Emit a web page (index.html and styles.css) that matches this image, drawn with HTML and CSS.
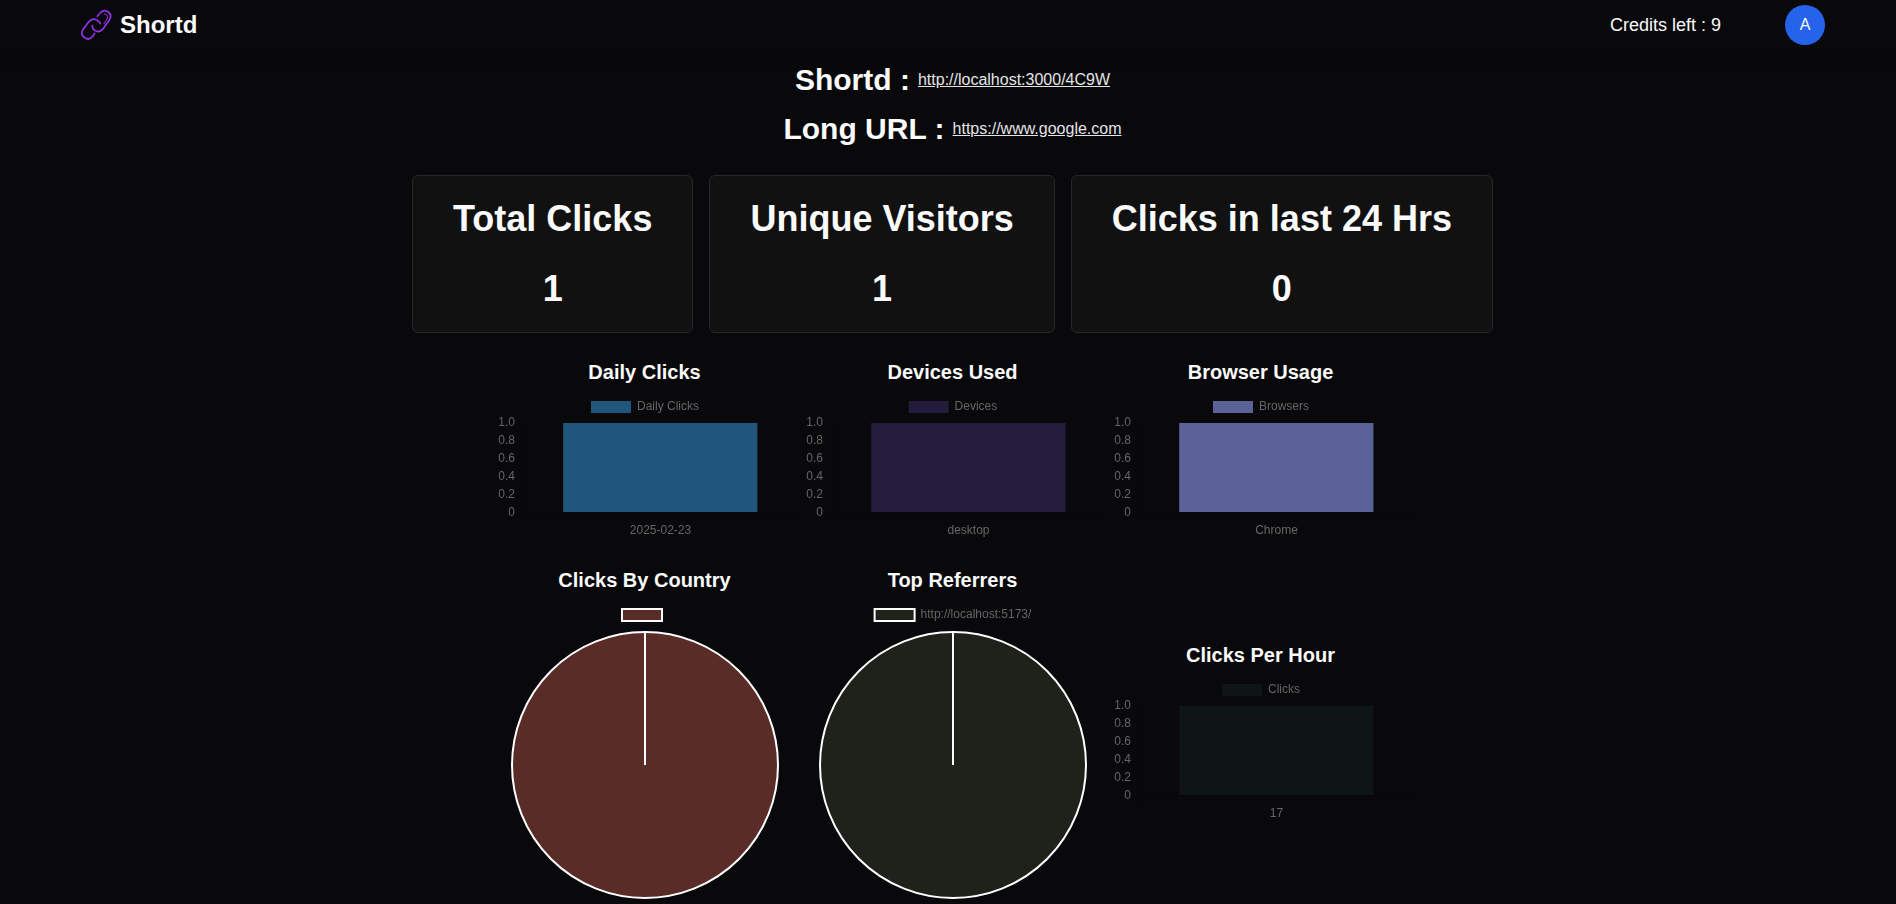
FILE: index.html
```html
<!DOCTYPE html>
<html lang="en">
<head>
<meta charset="utf-8">
<title>Shortd</title>
<link rel="stylesheet" href="styles.css">
</head>
<body>
<header class="navbar">
  <a class="brand">
    <svg class="logo" viewBox="0 0 96 96">
      <path d="M44 73L39 81Q27 96 14 86Q1 78 8 63L24 41Q38 24 53 35Q60 39 61 44"/>
      <path d="M52 22L62 10Q73 0 85 9Q97 19 88 33L71 57Q58 74 44 64Q36 58 37 50"/>
      <path class="thin" d="M74 15Q86 17 82 29L72 44"/>
    </svg>
    <span>Shortd</span>
  </a>
  <div class="account">
    <span class="credits">Credits left : 9</span>
    <span class="avatar">A</span>
  </div>
</header>
<main class="content">
  <section class="links">
    <div class="link-row"><h2>Shortd :</h2><a>http://localhost:3000/4C9W</a></div>
    <div class="link-row"><h2>Long URL :</h2><a>https://www.google.com</a></div>
  </section>
  <section class="stats">
    <div class="card"><h1>Total Clicks</h1><p>1</p></div>
    <div class="card"><h1>Unique Visitors</h1><p>1</p></div>
    <div class="card"><h1>Clicks in last 24 Hrs</h1><p>0</p></div>
  </section>
  <section class="charts">
    <figure class="chart">
      <h3>Daily Clicks</h3>
      <svg class="plot" width="300" height="150">
        <path class="axis" d="M30.5 32V129M22 121.5H300"/>
        <g class="daily"><rect x="96" y="10" width="40" height="12"/><rect x="68.2" y="32" width="194.2" height="89"/></g>
        <text x="142" y="19">Daily Clicks</text>
        <g class="ticks"><text x="20" y="35">1.0</text><text x="20" y="53">0.8</text><text x="20" y="71">0.6</text><text x="20" y="89">0.4</text><text x="20" y="107">0.2</text><text x="20" y="125">0</text></g>
        <text class="label" x="165.5" y="143">2025-02-23</text>
      </svg>
    </figure>
    <figure class="chart">
      <h3>Devices Used</h3>
      <svg class="plot" width="300" height="150">
        <path class="axis" d="M30.5 32V129M22 121.5H300"/>
        <g class="devices"><rect x="105.6" y="10" width="40" height="12"/><rect x="68.2" y="32" width="194.4" height="89"/></g>
        <text x="151.6" y="19">Devices</text>
        <g class="ticks"><text x="20" y="35">1.0</text><text x="20" y="53">0.8</text><text x="20" y="71">0.6</text><text x="20" y="89">0.4</text><text x="20" y="107">0.2</text><text x="20" y="125">0</text></g>
        <text class="label" x="165.5" y="143">desktop</text>
      </svg>
    </figure>
    <figure class="chart">
      <h3>Browser Usage</h3>
      <svg class="plot" width="300" height="150">
        <path class="axis" d="M30.5 32V129M22 121.5H300"/>
        <g class="browsers"><rect x="102" y="10" width="40" height="12"/><rect x="68.2" y="32" width="194.2" height="89"/></g>
        <text x="148" y="19">Browsers</text>
        <g class="ticks"><text x="20" y="35">1.0</text><text x="20" y="53">0.8</text><text x="20" y="71">0.6</text><text x="20" y="89">0.4</text><text x="20" y="107">0.2</text><text x="20" y="125">0</text></g>
        <text class="label" x="165.5" y="143">Chrome</text>
      </svg>
    </figure>
    <figure class="chart">
      <h3>Clicks By Country</h3>
      <svg class="plot" width="300" height="300">
        <g class="country outlined"><rect x="127" y="10" width="40" height="12"/><circle cx="150" cy="166" r="133"/><path d="M150 166V33"/></g>
      </svg>
    </figure>
    <figure class="chart">
      <h3>Top Referrers</h3>
      <svg class="plot" width="300" height="300">
        <g class="referrers outlined"><rect x="71.6" y="10" width="40" height="12"/><circle cx="150" cy="166" r="133"/><path d="M150 166V33"/></g>
        <text x="117.6" y="19">http://localhost:5173/</text>
      </svg>
    </figure>
    <figure class="chart">
      <h3>Clicks Per Hour</h3>
      <svg class="plot" width="300" height="150">
        <path class="axis" d="M30.5 32V129M22 121.5H300"/>
        <g class="hourly"><rect x="111" y="10" width="40" height="12"/><rect x="68.2" y="32" width="194.2" height="89"/></g>
        <text x="157" y="19">Clicks</text>
        <g class="ticks"><text x="20" y="35">1.0</text><text x="20" y="53">0.8</text><text x="20" y="71">0.6</text><text x="20" y="89">0.4</text><text x="20" y="107">0.2</text><text x="20" y="125">0</text></g>
        <text class="label" x="165.5" y="143">17</text>
      </svg>
    </figure>
  </section>
</main>
</body>
</html>
```
FILE: styles.css
```css
* { box-sizing: border-box; margin: 0; padding: 0; }
body {
  background: #09090b;
  color: #fafafa;
  font-family: "Liberation Sans", Arial, sans-serif;
  font-size: 16px;
  line-height: 24px;
  height: 904px;
  overflow: hidden;
}
.navbar {
  display: flex;
  justify-content: space-between;
  align-items: center;
  height: 50px;
  padding: 0 71px 0 80px;
  box-shadow: 0 10px 15px -3px rgba(0, 0, 0, .1);
}
.brand { display: flex; align-items: center; gap: 8px; font-size: 24px; font-weight: 700; line-height: 32px; }
.logo { width: 32px; height: 32px; fill: none; stroke: #9333ea; stroke-width: 5; stroke-linecap: round; }
.logo .thin { stroke-width: 3; }
.account { display: flex; align-items: center; gap: 64px; }
.credits { font-size: 18px; line-height: 28px; }
.avatar {
  display: flex; align-items: center; justify-content: center;
  width: 40px; height: 40px; border-radius: 50%; background: #2563eb;
}
.content { padding: 12px 0 0 9px; }
.links { display: flex; flex-direction: column; gap: 13px; }
.link-row { display: flex; justify-content: center; align-items: center; gap: 8px; height: 36px; }
.link-row h2 { font-size: 30px; line-height: 36px; }
.link-row a { color: #e4e4e7; text-decoration: underline; }
.stats { display: flex; justify-content: center; gap: 16px; margin-top: 28px; }
.card {
  display: flex; flex-direction: column; align-items: center; gap: 30px;
  height: 158px; padding: 23px 40px 0;
  background: #111; border: 1px solid #27272a; border-radius: 6px;
}
.card h1, .card p { font-size: 36px; font-weight: 700; line-height: 40px; }
.charts {
  display: grid; grid-template-columns: repeat(3, 300px);
  justify-content: center; align-items: center;
  column-gap: 8px; row-gap: 25px; padding-left: 1px; margin-top: 25px;
}
.chart h3 { font-size: 20px; line-height: 28px; text-align: center; margin-bottom: 5px; padding-right: 1px; }
.plot { display: block; overflow: visible; will-change: transform; }
.plot text { font-size: 12px; fill: #666; }
.plot .ticks text { text-anchor: end; }
.plot .label { text-anchor: middle; }
.axis { stroke: rgba(0, 0, 0, .1); fill: none; }
.daily { fill: #20567b; }
.devices { fill: #241c3c; }
.browsers { fill: #5a6298; }
.hourly { fill: #0f1416; }
.country { fill: #5a2c27; }
.referrers { fill: #1f211b; }
.outlined { stroke: #fff; stroke-width: 2; }
```
